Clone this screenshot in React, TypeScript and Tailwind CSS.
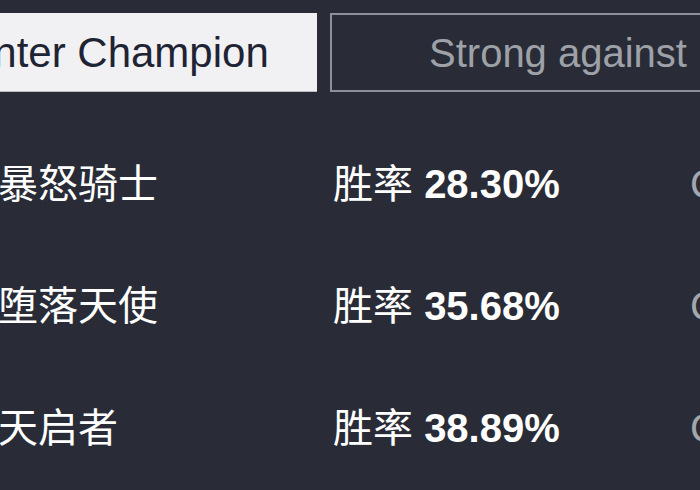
import React from "react";

interface Matchup {
  name: string;
  winRate: string;
}

const matchups: Matchup[] = [
  {name: "暴怒骑士", winRate: "28.30%"},
  {name: "堕落天使", winRate: "35.68%"},
  {name: "天启者", winRate: "38.89%"},
];

const font = "font-['Liberation_Sans','Noto_Sans_CJK_SC',sans-serif]";

export default function App() {
  return (
    <div className={`w-[700px] h-[490px] overflow-hidden bg-[#292c37] ${font}`}>
      {/* Tabs */}
      <div className="flex gap-[13px] ml-[-132px] pt-[13px]">
        <div className="w-[449px] h-[79px] shrink-0 flex items-center justify-center bg-[#f1f1f4] border-b border-[#b9bbc0]">
          <span className="text-[42px] text-[#1e2433]">Counter Champion</span>
        </div>
        <div className="w-[456px] h-[79px] shrink-0 flex items-center justify-center border-2 border-[#8e9097]">
          <span className="text-[40px] text-[#9ea1a8]">Strong against</span>
        </div>
      </div>

      {/* Rows */}
      <div className="flex flex-col mt-[31px] ml-[-2px]">
        {matchups.map((m) => (
          <div key={m.name} className="h-[122px] flex items-center whitespace-nowrap">
            <div className="w-[335px] shrink-0 text-[40px] text-white">{m.name}</div>
            <div className="w-[357px] shrink-0 text-[40px] text-white">
              胜率 <span className="font-bold">{m.winRate}</span>
            </div>
            <div className="text-[40px] text-[#a3a6ad]">C</div>
          </div>
        ))}
      </div>
    </div>
  );
}
